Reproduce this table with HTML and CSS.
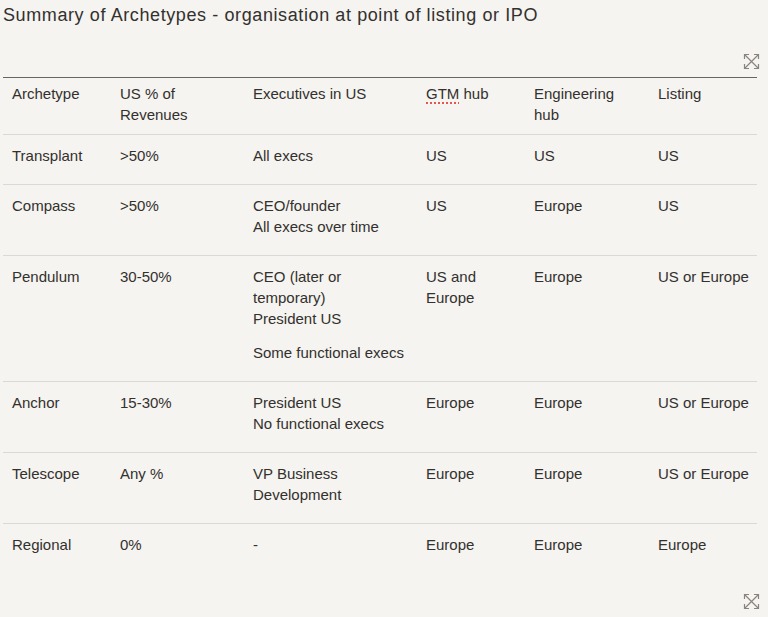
FILE: index.html
```html
<!DOCTYPE html>
<html>
<head>
<meta charset="utf-8">
<link rel="stylesheet" href="styles.css">
</head>
<body>
<div class="page">
  <h1 class="title">Summary of Archetypes - organisation at point of listing or IPO</h1>
  <div class="tools">
    <svg class="expand" width="17" height="17" viewBox="0 0 17 17" fill="none" stroke="#8a837e" stroke-width="1.2">
      <path d="M1.5 1.5 L15.5 15.5 M15.5 1.5 L1.5 15.5"/>
      <path d="M1.5 6 V1.5 H6 M11 1.5 H15.5 V6 M15.5 11 V15.5 H11 M6 15.5 H1.5 V11"/>
    </svg>
  </div>
  <table class="tbl">
    <colgroup>
      <col class="c1"><col class="c2"><col class="c3"><col class="c4"><col class="c5"><col class="c6">
    </colgroup>
    <thead>
      <tr>
        <th>Archetype</th>
        <th>US % of Revenues</th>
        <th>Executives in US</th>
        <th><span class="spell">GTM</span> hub</th>
        <th>Engineering hub</th>
        <th>Listing</th>
      </tr>
    </thead>
    <tbody>
      <tr>
        <td>Transplant</td><td>&gt;50%</td><td>All execs</td><td>US</td><td>US</td><td>US</td>
      </tr>
      <tr>
        <td>Compass</td><td>&gt;50%</td><td>CEO/founder<br>All execs over time</td><td>US</td><td>Europe</td><td>US</td>
      </tr>
      <tr>
        <td>Pendulum</td><td>30-50%</td><td><p>CEO (later or temporary)<br>President US</p><p>Some functional execs</p></td><td>US and Europe</td><td>Europe</td><td>US or Europe</td>
      </tr>
      <tr>
        <td>Anchor</td><td>15-30%</td><td>President US<br>No functional execs</td><td>Europe</td><td>Europe</td><td>US or Europe</td>
      </tr>
      <tr>
        <td>Telescope</td><td>Any %</td><td>VP Business Development</td><td>Europe</td><td>Europe</td><td>US or Europe</td>
      </tr>
      <tr>
        <td>Regional</td><td>0%</td><td>-</td><td>Europe</td><td>Europe</td><td>Europe</td>
      </tr>
    </tbody>
  </table>
  <div class="tools bottom">
    <svg class="expand" width="17" height="17" viewBox="0 0 17 17" fill="none" stroke="#8a837e" stroke-width="1.2">
      <path d="M1.5 1.5 L15.5 15.5 M15.5 1.5 L1.5 15.5"/>
      <path d="M1.5 6 V1.5 H6 M11 1.5 H15.5 V6 M15.5 11 V15.5 H11 M6 15.5 H1.5 V11"/>
    </svg>
  </div>
</div>
</body>
</html>
```
FILE: styles.css
```css
html, body {
  margin: 0;
  padding: 0;
  background: #f5f4f0;
}
body {
  font-family: "Liberation Sans", Arial, sans-serif;
  color: #33302e;
}
.page {
  width: 754px;
  padding: 3px 0 0 3px;
  display: flex;
  flex-direction: column;
}
.title {
  margin: 0;
  font-family: "Liberation Sans", Arial, sans-serif;
  font-size: 18px;
  letter-spacing: 0.6px;
  font-weight: normal;
  line-height: 24px;
  color: #33302e;
}
.tools {
  display: flex;
  justify-content: flex-end;
  margin-top: 26px;
  margin-right: -3px;
  height: 24px;
}
.tools.bottom {
  margin-top: 20px;
}
.expand {
  display: block;
}
.tbl {
  width: 754px;
  border-collapse: collapse;
  table-layout: fixed;
  font-size: 15px;
  line-height: 21px;
}
.c1 { width: 108px; }
.c2 { width: 133px; }
.c3 { width: 173px; }
.c4 { width: 108px; }
.c5 { width: 124px; }
.c6 { width: 108px; }
.tbl th {
  text-align: left;
  font-weight: normal;
  vertical-align: top;
  padding: 5px 9px 9px 9px;
  border-top: 1px solid #6b6560;
  border-bottom: 1px solid #dcd8d2;
}
.tbl td {
  vertical-align: top;
  padding: 10px 9px 18px 9px;
  border-bottom: 1px solid #dcd8d2;
}
.tbl th:last-child,
.tbl td:last-child {
  padding-right: 2px;
}
.tbl tbody tr:last-child td {
  border-bottom: none;
}
.tbl p {
  margin: 0;
}
.tbl p + p {
  margin-top: 13px;
}
.spell {
  text-decoration: underline dotted #e0221b;
  text-underline-offset: 4px;
}
```
